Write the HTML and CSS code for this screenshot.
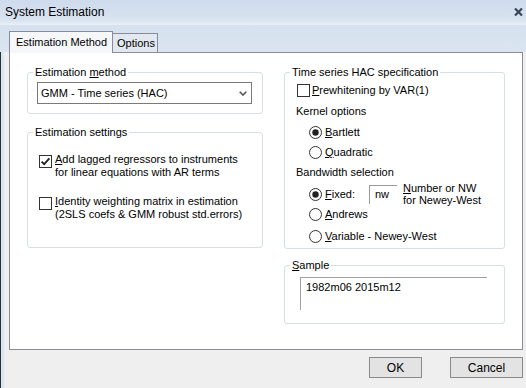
FILE: index.html
```html
<!DOCTYPE html>
<html>
<head>
<meta charset="utf-8">
<link rel="stylesheet" href="styles.css">
</head>
<body>
<div class="window">
  <div class="titlebar">
    <span class="title">System Estimation</span>
    <svg class="close" width="9" height="8" viewBox="0 0 9 8"><path d="M1 0.5 L8 7.5 M8 0.5 L1 7.5" stroke="#3a4658" stroke-width="2.2" fill="none"/></svg>
  </div>
  <div class="tabstrip">
    <div class="tab active">Estimation Method</div>
    <div class="tab inactive">Options</div>
  </div>
  <div class="client">
    <div class="panel">
      <div class="col col-left">
        <fieldset class="group g-method">
          <legend>Estimation <u>m</u>ethod</legend>
          <div class="combo">
            <span>GMM - Time series (HAC)</span>
            <svg class="chev" width="8" height="5" viewBox="0 0 8 5"><path d="M0.7 0.7 L4 4 L7.3 0.7" stroke="#555" stroke-width="1.6" fill="none"/></svg>
          </div>
        </fieldset>
        <fieldset class="group g-settings">
          <legend>Estimation settings</legend>
          <div class="check-row first">
            <svg class="cb" width="13" height="13" viewBox="0 0 13 13"><rect x="0.5" y="0.5" width="12" height="12" fill="#fff" stroke="#333"/><path d="M2.6 6.6 L5.2 9.2 L10.4 3.4" stroke="#222" stroke-width="1.8" fill="none"/></svg>
            <span class="lbl"><u>A</u>dd lagged regressors to instruments<br>for linear equations with AR terms</span>
          </div>
          <div class="check-row second">
            <svg class="cb" width="13" height="13" viewBox="0 0 13 13"><rect x="0.5" y="0.5" width="12" height="12" fill="#fff" stroke="#333"/></svg>
            <span class="lbl"><u>I</u>dentity weighting matrix in estimation<br>(2SLS coefs &amp; GMM robust std.errors)</span>
          </div>
        </fieldset>
      </div>
      <div class="col col-right">
        <fieldset class="group g-hac">
          <legend>Time series HAC specification</legend>
          <div class="hrow r-prew">
            <svg class="cb" width="13" height="13" viewBox="0 0 13 13"><rect x="0.5" y="0.5" width="12" height="12" fill="#fff" stroke="#333"/></svg>
            <span><u>P</u>rewhitening by VAR(1)</span>
          </div>
          <div class="hrow r-label r-kernel">Kernel options</div>
          <div class="hrow r-opt r-bart">
            <svg class="rb" width="13" height="13" viewBox="0 0 13 13"><circle cx="6.5" cy="6.5" r="6" fill="#fff" stroke="#333"/><circle cx="6.5" cy="6.5" r="3.2" fill="#222"/></svg>
            <span><u>B</u>artlett</span>
          </div>
          <div class="hrow r-opt">
            <svg class="rb" width="13" height="13" viewBox="0 0 13 13"><circle cx="6.5" cy="6.5" r="6" fill="#fff" stroke="#333"/></svg>
            <span><u>Q</u>uadratic</span>
          </div>
          <div class="hrow r-label">Bandwidth selection</div>
          <div class="hrow r-opt r-fixed">
            <svg class="rb" width="13" height="13" viewBox="0 0 13 13"><circle cx="6.5" cy="6.5" r="6" fill="#fff" stroke="#333"/><circle cx="6.5" cy="6.5" r="3.2" fill="#222"/></svg>
            <span class="fixed-lbl"><u>F</u>ixed:</span>
            <span class="nw">nw</span>
            <span class="note"><u>N</u>umber or NW<br>for Newey-West</span>
          </div>
          <div class="hrow r-opt">
            <svg class="rb" width="13" height="13" viewBox="0 0 13 13"><circle cx="6.5" cy="6.5" r="6" fill="#fff" stroke="#333"/></svg>
            <span><u>A</u>ndrews</span>
          </div>
          <div class="hrow r-opt r-var">
            <svg class="rb" width="13" height="13" viewBox="0 0 13 13"><circle cx="6.5" cy="6.5" r="6" fill="#fff" stroke="#333"/></svg>
            <span><u>V</u>ariable - Newey-West</span>
          </div>
        </fieldset>
        <fieldset class="group g-sample">
          <legend><u>S</u>ample</legend>
          <div class="sample-box">1982m06 2015m12</div>
        </fieldset>
      </div>
    </div>
    <div class="buttons">
      <button class="btn btn-ok">OK</button>
      <button class="btn btn-cancel">Cancel</button>
    </div>
  </div>
</div>
</body>
</html>
```
FILE: styles.css
```css
* { box-sizing: border-box; }
html, body { margin: 0; padding: 0; }
body {
  width: 526px;
  height: 388px;
  overflow: hidden;
  background: #efefef;
  font-family: "Liberation Sans", Arial, sans-serif;
  font-size: 11px;
  color: #000;
}
.window {
  width: 526px;
  height: 388px;
  display: flex;
  flex-direction: column;
}
.titlebar {
  height: 25px;
  display: flex;
  align-items: center;
  justify-content: space-between;
  padding: 0 3px 1px 5px;
  background: linear-gradient(#cedbec, #d8e3f0 80%, #eaf0f7);
  font-size: 12px;
  color: #000;
}
.tabstrip {
  height: 27px;
  display: flex;
  align-items: flex-end;
  padding-left: 9px;
  background: linear-gradient(#d5e1ef, #dbe5f1);
}
.tab { line-height: 14px; white-space: nowrap; }
.tab.active {
  width: 104px;
  height: 22px;
  margin-bottom: -1px;
  border: 1px solid #898c95;
  border-bottom: none;
  background: #f6f7f9;
  padding: 3px 0 0 6px;
  position: relative;
  z-index: 1;
}
.tab.inactive {
  width: 45px;
  height: 19px;
  border: 1px solid #898c95;
  border-left: none;
  border-bottom: none;
  background: #e2e8ef;
  padding: 2px 0 0 4px;
}
.client {
  flex: 1;
  border-left: 1px solid #25303c;
  box-shadow: inset 3px 0 #dce6f1;
}
.panel {
  margin: 0 3px 0 8px;
  height: 298px;
  border: 1px solid #898c95;
  background: #fff;
  display: grid;
  grid-template-columns: 236px 221px;
  column-gap: 21px;
  align-items: start;
  padding: 12px 0 0 17px;
}
.col { display: flex; flex-direction: column; }
.col-left { gap: 11px; }
.col-right { gap: 9px; }
fieldset.group {
  margin: 0;
  padding: 0;
  min-width: 0;
  border: 1px solid #d5dfe5;
  border-radius: 3px;
}
fieldset.group legend {
  margin-left: 5px;
  padding: 0 2px;
  line-height: 14px;
}
.g-method { height: 49px; }
.g-settings { height: 123px; }
.g-hac { height: 184px; }
.g-sample { height: 66px; }
.combo {
  width: 215px;
  height: 22px;
  margin: 3px 0 0 9px;
  border: 1px solid #7a7a7a;
  background: #fff;
  display: flex;
  align-items: center;
  justify-content: space-between;
  padding: 0 4px 0 3px;
}
.check-row {
  display: flex;
  align-items: flex-start;
  padding-left: 11px;
  line-height: 13px;
}
.check-row.first { margin-top: 14px; }
.check-row.second { margin-top: 16px; }
.check-row .cb { margin-top: 2px; margin-right: 3px; flex: none; }
.hrow {
  height: 20px;
  display: flex;
  align-items: center;
  white-space: nowrap;
}
.r-prew { margin-top: 1px; padding-left: 12px; }
.r-prew .cb { margin-right: 2px; }
.r-label { padding-left: 11px; }
.r-kernel { margin-top: 1px; }
.r-opt { padding-left: 24px; }
.r-opt .rb { margin-right: 3px; flex: none; }
.r-bart { margin-top: 1px; }
.r-fixed { margin-top: 2px; }
.r-var { margin-top: 2px; }
.fixed-lbl { width: 44px; }
.nw {
  width: 28px;
  height: 19px;
  border-left: 1px solid #9a9a9a;
  border-top: 1px solid #9a9a9a;
  padding-left: 5px;
  line-height: 17px;
  margin-right: 6px;
}
.note { line-height: 12px; }
.sample-box {
  width: 187px;
  height: 33px;
  margin: 5px 0 0 15px;
  border-left: 1px solid #a0a0a0;
  border-top: 1px solid #a0a0a0;
  padding: 2px 0 0 5px;
  line-height: 14px;
}
.buttons {
  display: flex;
  justify-content: flex-end;
  gap: 28px;
  padding: 7px 3px 0 0;
}
.btn {
  height: 21px;
  border: 1px solid #8a8a8a;
  background: #e3e3e3;
  font-family: "Liberation Sans", Arial, sans-serif;
  font-size: 12px;
  color: #000;
  padding: 0;
}
.btn-ok { width: 53px; }
.btn-cancel { width: 73px; }
```
